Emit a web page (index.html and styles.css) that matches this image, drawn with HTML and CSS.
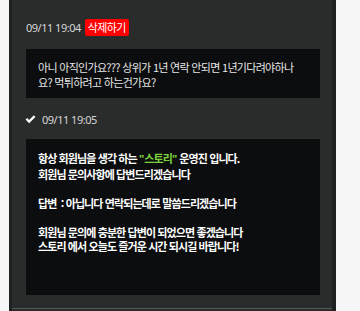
FILE: index.html
```html
<!DOCTYPE html>
<html lang="ko">
<head>
<meta charset="utf-8">
<link rel="stylesheet" href="styles.css">
</head>
<body>
<div class="page">
  <div class="panel">
    <div class="item">
      <div class="meta">
        <span class="date">09/11 19:04</span>
        <span class="del">삭제하기</span>
      </div>
      <div class="box question">아니 아직인가요??? 상위가 1년 연락 안되면 1년기다려야하나요? 먹튀하려고 하는건가요?</div>
    </div>
    <div class="item">
      <div class="meta">
        <svg class="check" width="11" height="9" viewBox="0 0 11 9"><path d="M0.6 4.6 L2.2 3.1 L4.1 5 L8.8 0.3 L10.4 1.9 L4.1 8.2 Z" fill="#fff"/></svg>
        <span class="date">09/11 19:05</span>
      </div>
      <div class="box answer">항상 회원님을 생각 하는 <span class="green"><span class="q">"</span>스토리<span class="q">"</span></span> 운영진 입니다.<br>회원님 문의사항에 답변드리겠습니다<br><br>답변 &nbsp;: 아닙니다 연락되는데로 말씀드리겠습니다<br><br>회원님 문의에 충분한 답변이 되었으면 좋겠습니다<br>스토리 에서 오늘도 즐거운 시간 되시길 바랍니다!<br><br><br></div>
    </div>
    <div class="divider"></div>
  </div>
</div>
</body>
</html>
```
FILE: styles.css
```css
html, body {
  margin: 0;
  padding: 0;
  background: #f7f7f7;
}
body {
  font-family: "Noto Sans CJK KR", "Noto Sans", sans-serif;
  font-size: 11px;
}
.page {
  width: 327px;
  margin-left: 9px;
  height: 311px;
  background: #1f2022;
  padding: 0 4px 0 3px;
  box-sizing: border-box;
}
.panel {
  background: #2a2b2b;
  height: 100%;
  padding: 17px 12px 0 14px;
  box-sizing: border-box;
}
.item {
  display: flex;
  flex-direction: column;
}
.meta {
  display: flex;
  align-items: center;
  gap: 4px;
  height: 20px;
  color: #d6d6d6;
}
.date {
  font-family: "Noto Sans", "Noto Sans CJK KR", sans-serif;
  font-size: 11px;
  letter-spacing: -0.5px;
}
.check {
  margin-left: -1px;
  margin-right: 2px;
}
.del {
  background: #ff0000;
  color: #fff;
  border-radius: 2px;
  padding: 0 3px;
  height: 17px;
  line-height: 17px;
  font-size: 11px;
  letter-spacing: -0.6px;
}
.box {
  background: #0c0d0e;
  color: #e6e6e6;
  margin-top: 12px;
  padding: 11px 12px 9px;
  line-height: 14.5px;
  letter-spacing: -0.7px;
}
.question {
  margin-bottom: 11px;
  padding-right: 17px;
}
.answer {
  font-weight: bold;
  color: #ffffff;
  margin-top: 10px;
  padding-top: 12px;
  padding-bottom: 12px;
  letter-spacing: -0.9px;
}
.green {
  color: #7bd23c;
}
.q {
  font-family: "Noto Sans", sans-serif;
  letter-spacing: 0;
}
.divider {
  height: 1px;
  background: #555657;
  margin: 13px -12px 0 -14px;
}
```
